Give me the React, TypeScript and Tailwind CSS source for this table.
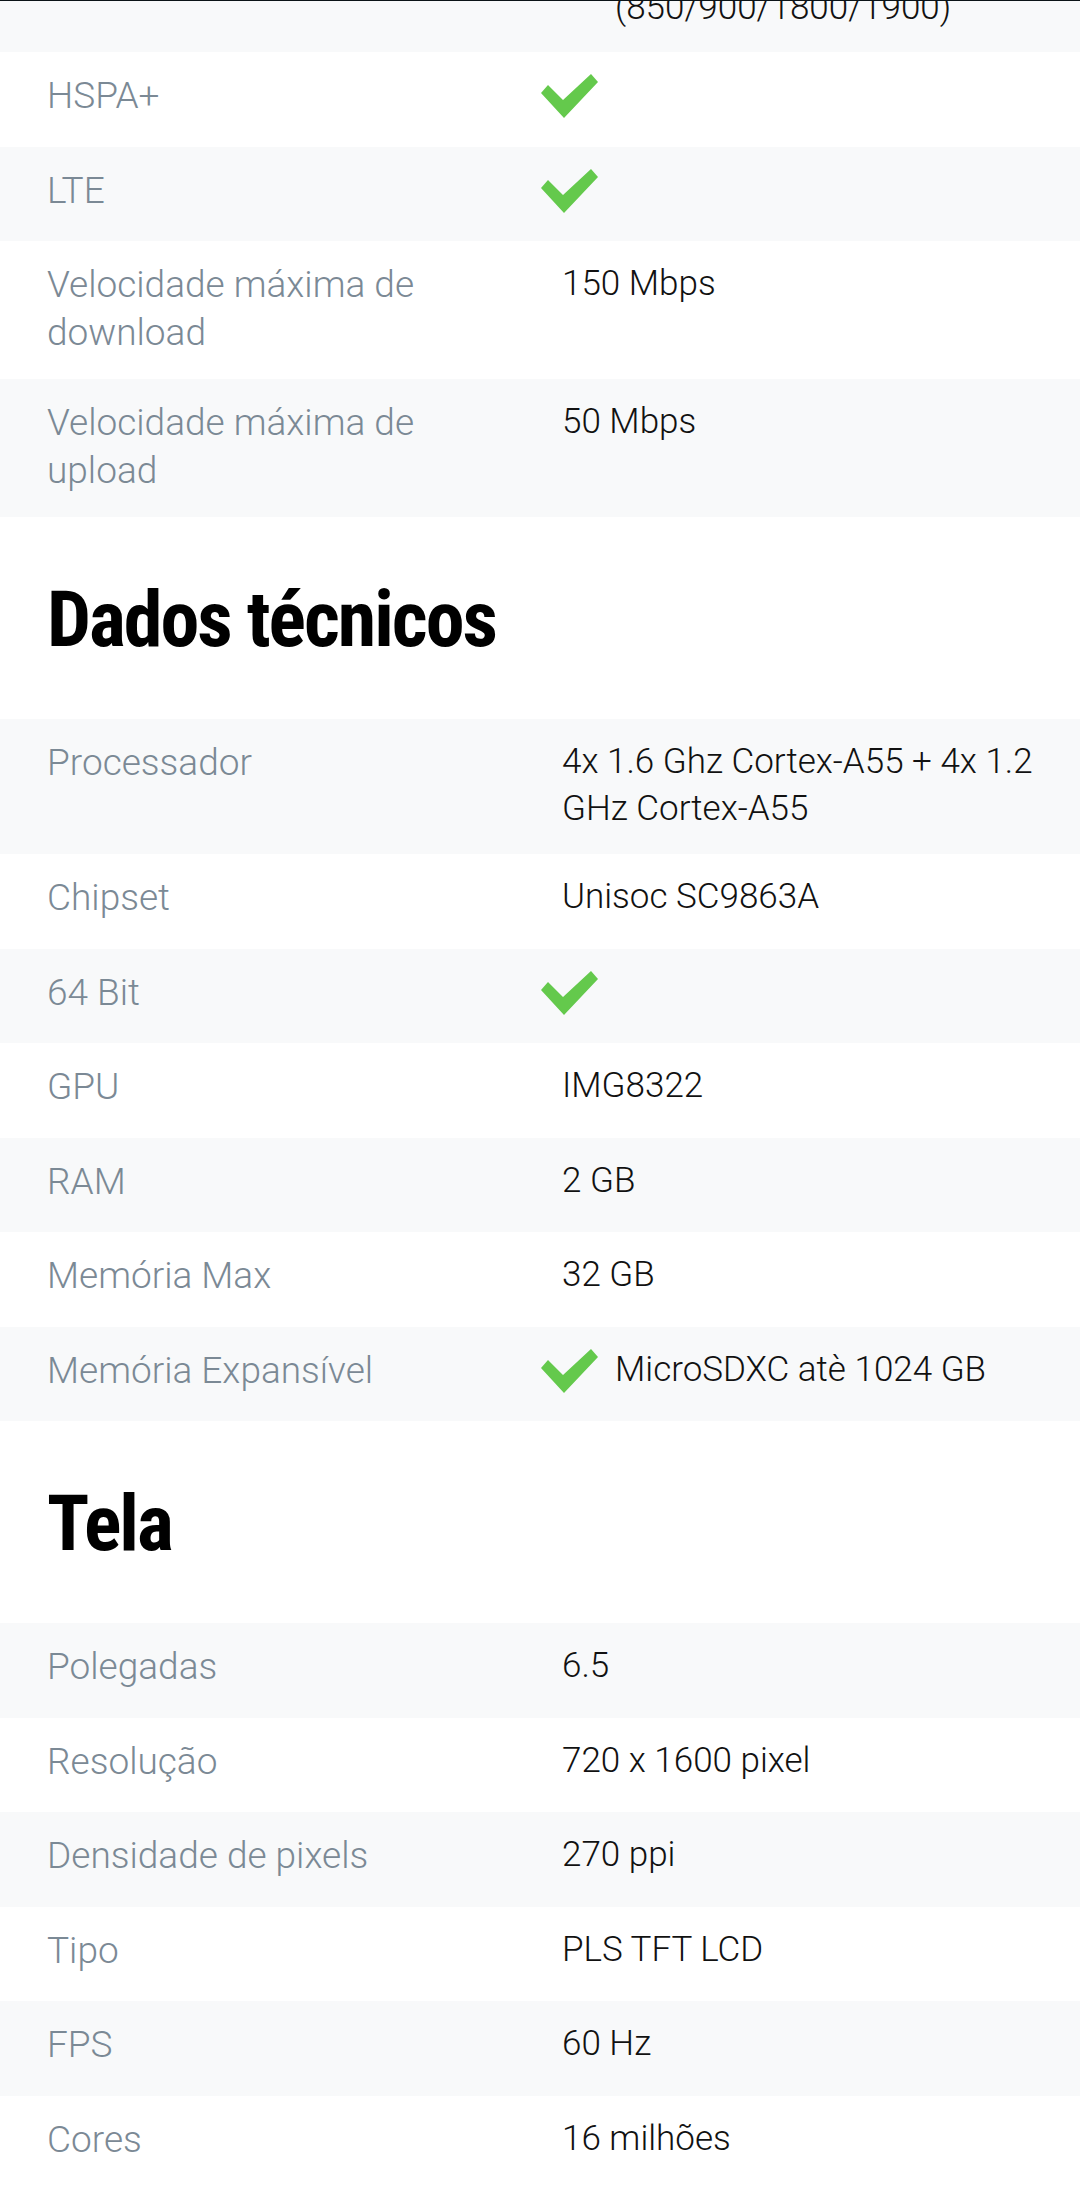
import type { ReactNode } from 'react'

type Row = {
  label: string
  value?: string
  check?: boolean
}

const network: Row[] = [
  { label: 'HSPA+', check: true },
  { label: 'LTE', check: true },
  { label: 'Velocidade máxima de download', value: '150 Mbps' },
  { label: 'Velocidade máxima de upload', value: '50 Mbps' },
]

const tech: Row[] = [
  { label: 'Processador', value: '4x 1.6 Ghz Cortex-A55 + 4x 1.2 GHz Cortex-A55' },
  { label: 'Chipset', value: 'Unisoc SC9863A' },
  { label: '64 Bit', check: true },
  { label: 'GPU', value: 'IMG8322' },
  { label: 'RAM', value: '2 GB' },
  { label: 'Memória Max', value: '32 GB' },
  { label: 'Memória Expansível', check: true, value: 'MicroSDXC atè 1024 GB' },
]

const screen: Row[] = [
  { label: 'Polegadas', value: '6.5' },
  { label: 'Resolução', value: '720 x 1600 pixel' },
  { label: 'Densidade de pixels', value: '270 ppi' },
  { label: 'Tipo', value: 'PLS TFT LCD' },
  { label: 'FPS', value: '60 Hz' },
  { label: 'Cores', value: '16 milhões' },
]

function Check() {
  return (
    <svg viewBox="0 0 57 44" className="w-[57px] h-[44px] shrink-0 mt-[2px]">
      <polygon points="0,19 7,11 22,26 50,0 57,8 23,44" fill="#64c94c" />
    </svg>
  )
}

function SpecRow({ row, gray }: { row: Row; gray: boolean }) {
  let value: ReactNode
  if (row.check && row.value) {
    value = (
      <div className="flex items-start gap-[17px]">
        <Check />
        <span className="text-[#111] text-[35px] leading-[46.5px]">{row.value}</span>
      </div>
    )
  } else if (row.check) {
    value = <Check />
  } else {
    value = <div className="pl-[21px] text-[#111] text-[35px] leading-[46.5px]">{row.value}</div>
  }

  return (
    <div className={`flex min-h-[94.5px] pt-[20px] pb-[22px] pl-[47px] pr-[30px] ${gray ? 'bg-[#f8f9fa]' : 'bg-white'}`}>
      <div className="w-[494px] shrink-0 pr-[74px] text-[#7b8995] text-[37px] leading-[48px]">{row.label}</div>
      <div className="flex-1">{value}</div>
    </div>
  )
}

function Heading({ children }: { children: ReactNode }) {
  return (
    <h2 className="pl-[47px] mt-[56px] mb-[52px] text-[78px] leading-[94px] font-bold text-black font-stretch-[78%] tracking-[-2px]">
      {children}
    </h2>
  )
}

export default function App() {
  return (
    <div className="bg-white min-h-[2187px] font-light" style={{ fontFamily: 'Roboto, "Noto Sans", sans-serif' }}>
      <div className="h-px bg-[#0b1317]" />
      <div className="h-[51px] overflow-hidden bg-[#f8f9fa] flex flex-col justify-end pb-[21px]">
        <div className="pl-[615px] text-[#111] text-[35px] leading-[46.5px]">(850/900/1800/1900)</div>
      </div>
      {network.map((r, i) => (
        <SpecRow key={r.label} row={r} gray={i % 2 === 1} />
      ))}

      <Heading>Dados técnicos</Heading>
      {tech.map((r, i) => (
        <SpecRow key={r.label} row={r} gray={i % 2 === 0} />
      ))}

      <Heading>Tela</Heading>
      {screen.map((r, i) => (
        <SpecRow key={r.label} row={r} gray={i % 2 === 0} />
      ))}
    </div>
  )
}
